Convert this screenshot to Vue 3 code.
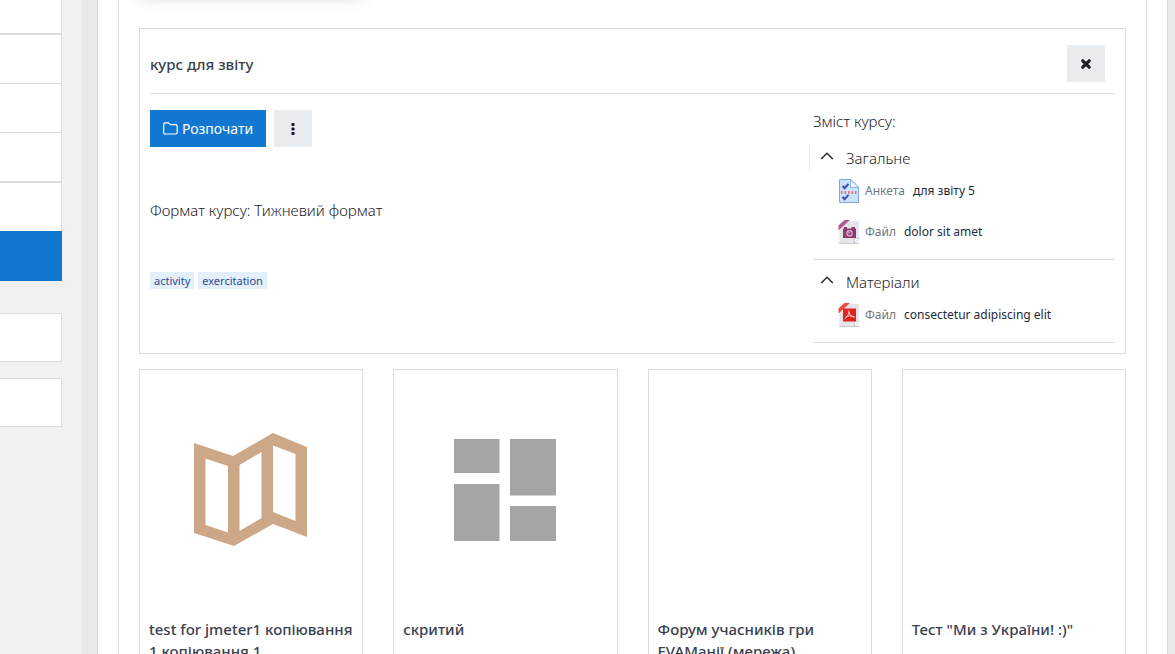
<script setup>
const menuRows = [
  { id: 1, kind: 'first' },
  { id: 2, kind: 'plain' },
  { id: 3, kind: 'plain' },
  { id: 4, kind: 'double' },
  { id: 5, kind: 'last' },
  { id: 6, kind: 'active' },
]

const tags = ['activity', 'exercitation']

const sections = [
  {
    name: 'Загальне',
    focused: true,
    items: [
      { icon: 'survey', type: 'Анкета', title: 'для звіту 5' },
      { icon: 'image', type: 'Файл', title: 'dolor sit amet' },
    ],
  },
  {
    name: 'Матеріали',
    focused: false,
    items: [{ icon: 'pdf', type: 'Файл', title: 'consectetur adipiscing elit' }],
  },
]

const courses = [
  { title: 'test for jmeter1 копіювання 1 копіювання 1', art: 'map' },
  { title: 'скритий', art: 'blocks' },
  { title: 'Форум учасників гри EVAМанії (мережа)', art: '' },
  { title: 'Тест "Ми з України! :)"', art: '' },
]
</script>

<template>
  <div class="page">
    <aside class="sidebar">
      <nav class="menu">
        <div v-for="row in menuRows" :key="row.id" class="menu-row" :class="row.kind"></div>
      </nav>
      <div class="side-box"></div>
      <div class="side-box"></div>
    </aside>
    <div class="gutter"></div>

    <main class="main">
      <div class="region">
        <div class="lifted"></div>

        <section class="details">
          <header class="details-head">
            <h2>курс для звіту</h2>
            <button class="btn-grey" type="button" aria-label="Закрити">
              <svg width="12" height="12" viewBox="0 0 12 12">
                <path d="M2.800 2.800 9.200 9.200M9.200 2.800 2.800 9.200" stroke="#1d2125" stroke-width="3.2" stroke-linecap="round" />
              </svg>
            </button>
          </header>

          <div class="details-body">
            <div class="info">
              <div class="actions">
                <button class="btn-start" type="button">
                  <svg width="15" height="13" viewBox="0 0 15 13" fill="none" stroke="#fff" stroke-width="1.2">
                    <path d="M2 .8h3.600l1.800 1.800h5.400c.8 0 1.400.6 1.400 1.400v6.600c0 .8-.6 1.400-1.400 1.400H2C1.200 12 .7 11.400.7 10.600V2.200C.7 1.400 1.200.8 2 .8z" />
                  </svg>
                  Розпочати
                </button>
                <button class="btn-grey" type="button" aria-label="Меню">
                  <svg width="4" height="12" viewBox="0 0 4 12" fill="#1d1030">
                    <rect x=".5" y="0" width="3" height="3" rx=".8" />
                    <rect x=".5" y="4.500" width="3" height="3" rx=".8" />
                    <rect x=".5" y="9" width="3" height="3" rx=".8" />
                  </svg>
                </button>
              </div>
              <p class="format">Формат курсу: Тижневий формат</p>
              <div class="tags">
                <a v-for="tag in tags" :key="tag" class="tag" href="#">{{ tag }}</a>
              </div>
            </div>

            <div class="contents">
              <p class="contents-title">Зміст курсу:</p>
              <section v-for="s in sections" :key="s.name" class="section">
                <button class="toggle" :class="{ focused: s.focused }" type="button">
                  <svg width="14" height="8" viewBox="0 0 14 8" fill="none" stroke="#2b2f38" stroke-width="1.6">
                    <path d="M1.200 7 7 1.300 12.800 7" />
                  </svg>
                  <span>{{ s.name }}</span>
                </button>
                <ul class="items">
                  <li v-for="item in s.items" :key="item.title">
                    <svg v-if="item.icon === 'survey'" width="22" height="24" viewBox="0 0 22 24">
                      <path d="M1.500.5H13L20.500 8v15.500h-19z" fill="#c9e4fa" stroke="#7fa9ea" />
                      <path d="M12.500.5V8.500h8z" fill="#f0f8ff" stroke="#8fb5ee" />
                      <path d="M4.500 6.800 6.500 9.200 10.500 4.800M4.500 17.800 6.500 20.200 10.500 15.800" fill="none" stroke="#4048b8" stroke-width="2" />
                      <path d="M3 13.500H19" stroke="#f06a7c" stroke-width="3" stroke-dasharray="1.500 2" />
                    </svg>
                    <svg v-else width="22" height="24" viewBox="0 0 22 24">
                      <path d="M1 23.300h20" stroke="#c6c6cc" stroke-width="1.200" />
                      <path d="M1.500 1h19.500V18.500l-4.500 4.500h-15z" fill="#e4e4ea" />
                      <path d="M21 18.500h-4.500v4.500z" fill="#fff" stroke="#b9b9c2" stroke-width=".6" />
                      <path d="M0 0H6L0 6z" fill="#fff" />
                      <path d="M6.500 0H12L.5 10.500V5.500z" :fill="item.icon === 'pdf' ? '#ee4a40' : '#b45a8f'" />
                      <template v-if="item.icon === 'pdf'">
                        <rect x="5" y="5.500" width="13" height="13" fill="#e2231f" />
                        <path d="M10.500 7.500c1.500 1-.5 6-4 8.500M10.800 9c.7 3 2.700 5 5.700 5M8 13.800c2-1 5-1.600 8.500.2" fill="none" stroke="#ffd5d0" stroke-width="1" />
                      </template>
                      <template v-else>
                        <path d="M5 8.500h1V7h3v1.500h4.500V7H17v1.500h1v9.500H5z" fill="#8c3a70" />
                        <circle cx="11.500" cy="13.200" r="3.200" fill="#dcbcd0" />
                        <circle cx="11.500" cy="13.200" r="2" fill="#8c3a70" />
                        <circle cx="11" cy="12.700" r=".8" fill="#e7cfdf" />
                      </template>
                    </svg>
                    <span class="type">{{ item.type }}</span>
                    <a href="#">{{ item.title }}</a>
                  </li>
                </ul>
              </section>
            </div>
          </div>
        </section>

        <div class="courses">
          <article v-for="c in courses" :key="c.title" class="course">
            <div class="art">
              <svg v-if="c.art === 'map'" width="114" height="114" viewBox="0 0 114 114">
                <path fill="#cca888" fill-rule="evenodd" d="M0 10 39 23 79 0 113 14V104L79 91 40 113 0 100zM11.500 25.500V92L34 99.500V33zM45.500 32V98L67.500 85V19zM79 12.500V79L101.500 88V21z" />
              </svg>
              <svg v-else-if="c.art === 'blocks'" width="102" height="102" viewBox="0 0 102 102" fill="#a5a5a5">
                <path d="M0 0h45.500v34H0zM56 0h46v56.500H56zM0 45h45.500v57H0zM56 67h46v35H56z" />
              </svg>
            </div>
            <h3>{{ c.title }}</h3>
          </article>
        </div>
      </div>
    </main>
    <div class="edge"></div>
  </div>
</template>

<style>
html,
body {
  margin: 0;
}
</style>

<style scoped>
* {
  box-sizing: border-box;
}
.page {
  display: flex;
  height: 100vh;
  overflow: hidden;
  background: #f1f1f1;
  color: #1d2125;
  font-family: "Noto Sans", "Open Sans", sans-serif;
  font-size: 15px;
  line-height: 22px;
}
.sidebar {
  flex: none;
  width: 62px;
}
.menu {
  margin-bottom: 32px;
}
.menu-row {
  height: 49px;
  background: #fff;
  border-right: 1px solid #dcdcdc;
  border-bottom: 1px solid #dcdcdc;
}
.menu-row.first {
  height: 35px;
  border-bottom-width: 2px;
}
.menu-row.double {
  height: 50px;
  border-bottom-width: 2px;
}
.menu-row.last {
  height: 48px;
  border-bottom: 0;
}
.menu-row.active {
  height: 50px;
  background: #1177d1;
  border: 0;
}
.side-box {
  height: 49px;
  margin-bottom: 16px;
  background: #fff;
  border: 1px solid #dcdcdc;
  border-left: 0;
}
.gutter {
  flex: none;
  width: 15px;
  margin-left: 20px;
  background: #e8e8e8;
}
.main {
  flex: 1;
  min-width: 0;
  height: max-content;
  min-height: 100%;
  padding: 0 20px;
  background: #fff;
  border: solid #dcdcdc;
  border-width: 0 1px;
}
.edge {
  flex: none;
  width: 7px;
  background: #e8e8e8;
}
.region {
  padding: 0 20px 20px;
  border: solid #dcdcdc;
  border-width: 0 1px;
}
.lifted {
  width: calc((100% - 90px) / 4);
  height: 20px;
  margin-top: -24px;
  margin-bottom: 32px;
  background: #fff;
  box-shadow: 0 0 16px rgba(0, 0, 0, 0.2);
}
.details {
  margin-bottom: 15px;
  padding: 16px 10px 10px;
  border: 1px solid #dcdcdc;
}
.details-head {
  display: flex;
  align-items: flex-start;
  justify-content: space-between;
  height: 49px;
  padding-right: 10px;
  border-bottom: 1px solid #e0e0e0;
}
h2,
h3 {
  margin: 0;
  color: #3a4050;
  font-size: 15px;
  font-weight: 500;
  line-height: 22px;
}
h2 {
  padding-top: 8px;
}
button {
  padding: 0;
  border: 0;
  color: inherit;
  font: inherit;
  cursor: pointer;
}
.btn-grey {
  display: flex;
  align-items: center;
  justify-content: center;
  width: 38px;
  height: 37px;
  background: #e9ecef;
}
.details-body {
  display: flex;
  padding-top: 16px;
}
.info {
  flex: 1;
}
.actions {
  display: flex;
  gap: 8px;
}
.btn-start {
  display: flex;
  align-items: center;
  justify-content: center;
  gap: 4px;
  width: 116px;
  height: 37px;
  background: #1177d1;
  color: #fff;
  font-size: 14px;
}
p {
  margin: 0;
}
.format {
  margin-top: 52px;
  font-weight: 300;
}
.tags {
  display: flex;
  gap: 4px;
  margin-top: 51px;
}
.tag {
  padding: 0 4px;
  background: #e3effb;
  color: #2d4f8f;
  font-size: 11px;
  line-height: 17px;
}
a {
  color: #1d2b3a;
  text-decoration: none;
}
.contents {
  width: 302px;
}
.contents-title {
  margin-bottom: 12px;
  font-weight: 300;
}
.section {
  margin-bottom: 8px;
  border-bottom: 1px solid #dcdcdc;
}
.section:last-child {
  margin-bottom: 0;
}
.toggle {
  display: flex;
  align-items: center;
  gap: 12px;
  height: 28px;
  margin-left: -4px;
  padding-left: 10px;
  background: none;
  border-left: 1px solid transparent;
  font-weight: 300;
}
.toggle.focused {
  border-left-color: #eee;
}
.toggle svg {
  margin-bottom: 4px;
}
.items {
  margin: 0;
  padding: 0 0 5px 25px;
  list-style: none;
}
.items li {
  display: flex;
  align-items: center;
  height: 41px;
  padding-bottom: 3px;
  font-size: 12px;
}
.type {
  margin: 0 8px 0 5px;
  color: #6f7780;
}
.courses {
  display: grid;
  grid-template-columns: repeat(4, 1fr);
  gap: 30px;
}
.course {
  min-height: 320px;
  padding: 0 9px 20px;
  border: 1px solid #dcdcdc;
}
.art {
  display: flex;
  align-items: center;
  justify-content: center;
  height: 240px;
  margin-bottom: 8px;
}
</style>
